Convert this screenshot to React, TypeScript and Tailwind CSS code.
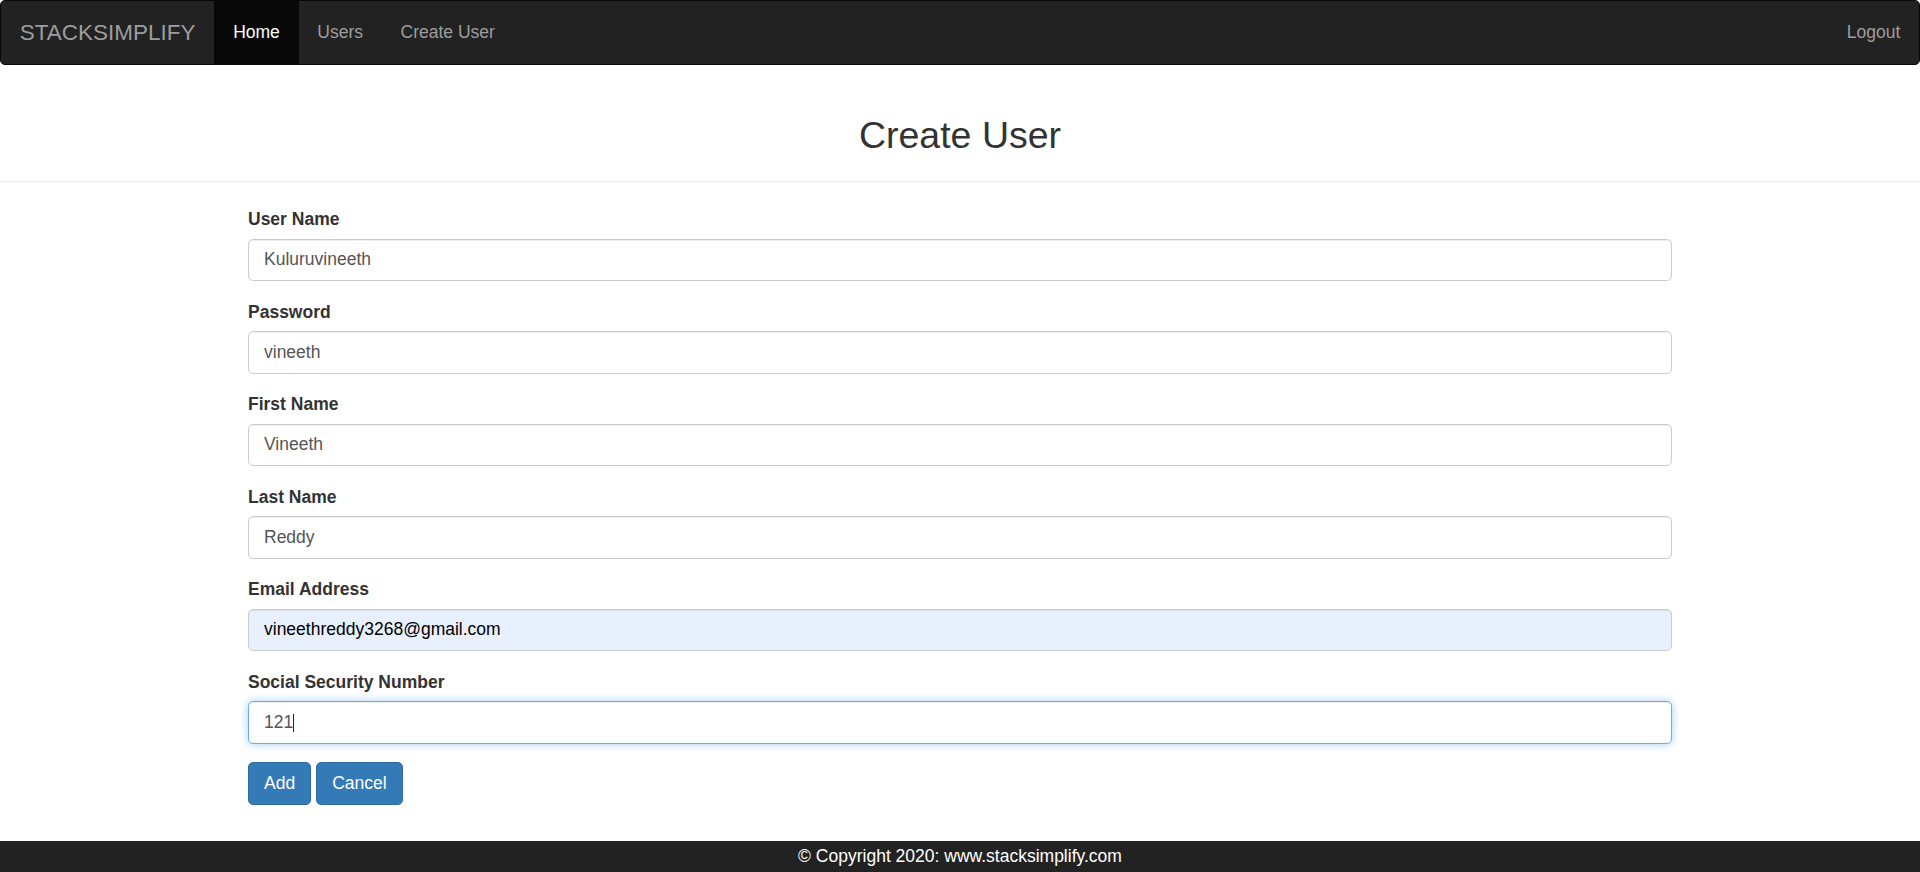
import React from 'react';

const fields = [
  { label: 'User Name', value: 'Kuluruvineeth' },
  { label: 'Password', value: 'vineeth' },
  { label: 'First Name', value: 'Vineeth' },
  { label: 'Last Name', value: 'Reddy' },
  { label: 'Email Address', value: 'vineethreddy3268@gmail.com', autofill: true },
];

export default function App() {
  return (
    <div className="min-h-screen flex flex-col bg-white text-[#333] font-['Liberation_Sans',Arial,sans-serif]">
      <nav className="h-[65px] flex items-stretch justify-between bg-[#222] border border-[#080808] rounded-[5px]">
        <div className="flex items-stretch">
          <a className="flex items-center px-[18.75px] text-[22.5px] text-[#9d9d9d]">STACKSIMPLIFY</a>
          <a className="flex items-center px-[18.75px] text-[17.5px] text-white bg-[#080808]">Home</a>
          <a className="flex items-center px-[18.75px] text-[17.5px] text-[#9d9d9d]">Users</a>
          <a className="flex items-center px-[18.75px] text-[17.5px] text-[#9d9d9d]">Create User</a>
        </div>
        <a className="flex items-center px-[18.75px] text-[17.5px] text-[#9d9d9d]">Logout</a>
      </nav>

      <div className="mt-[50px] pb-[24.5px] border-b border-[#eee]">
        <h2 className="text-center text-[37.5px] leading-[1.1] font-normal">Create User</h2>
      </div>

      <main className="flex-1">
        <form className="w-[1424px] mx-auto pt-[25.5px] text-[17.5px]">
          {fields.map((f) => (
            <div key={f.label} className="mb-[18.75px]">
              <label className="block font-bold leading-[25px] mb-[6.25px]">{f.label}</label>
              <input
                readOnly
                value={f.value}
                className={`block w-full h-[42.5px] px-[15px] border border-[#ccc] rounded-[5px] text-[#555] outline-none shadow-[inset_0_1px_1px_rgba(0,0,0,0.075)] ${f.autofill ? 'bg-[#e8f0fe] text-black' : 'bg-white'}`}
              />
            </div>
          ))}
          <div className="mb-[18.75px]">
            <label className="block font-bold leading-[25px] mb-[6.25px]">Social Security Number</label>
            <div className="relative">
              <input
                readOnly
                value="121"
                className="block w-full h-[42.5px] px-[15px] bg-white border border-[#66afe9] rounded-[5px] text-[#555] outline-none shadow-[inset_0_1px_1px_rgba(0,0,0,0.075),0_0_8px_rgba(102,175,233,0.6)]"
              />
              <span className="absolute left-[45px] top-[13px] w-px h-[18px] bg-[#222]" />
            </div>
          </div>
          <div className="flex gap-[5px]">
            <button type="button" className="h-[42.5px] px-[15px] bg-[#337ab7] border border-[#2e6da4] rounded-[5px] text-white">Add</button>
            <button type="button" className="h-[42.5px] px-[15px] bg-[#337ab7] border border-[#2e6da4] rounded-[5px] text-white">Cancel</button>
          </div>
        </form>
      </main>

      <footer className="h-[31px] flex items-center justify-center bg-[#222] text-white text-[17.5px]">
        © Copyright 2020: www.stacksimplify.com
      </footer>
    </div>
  );
}
